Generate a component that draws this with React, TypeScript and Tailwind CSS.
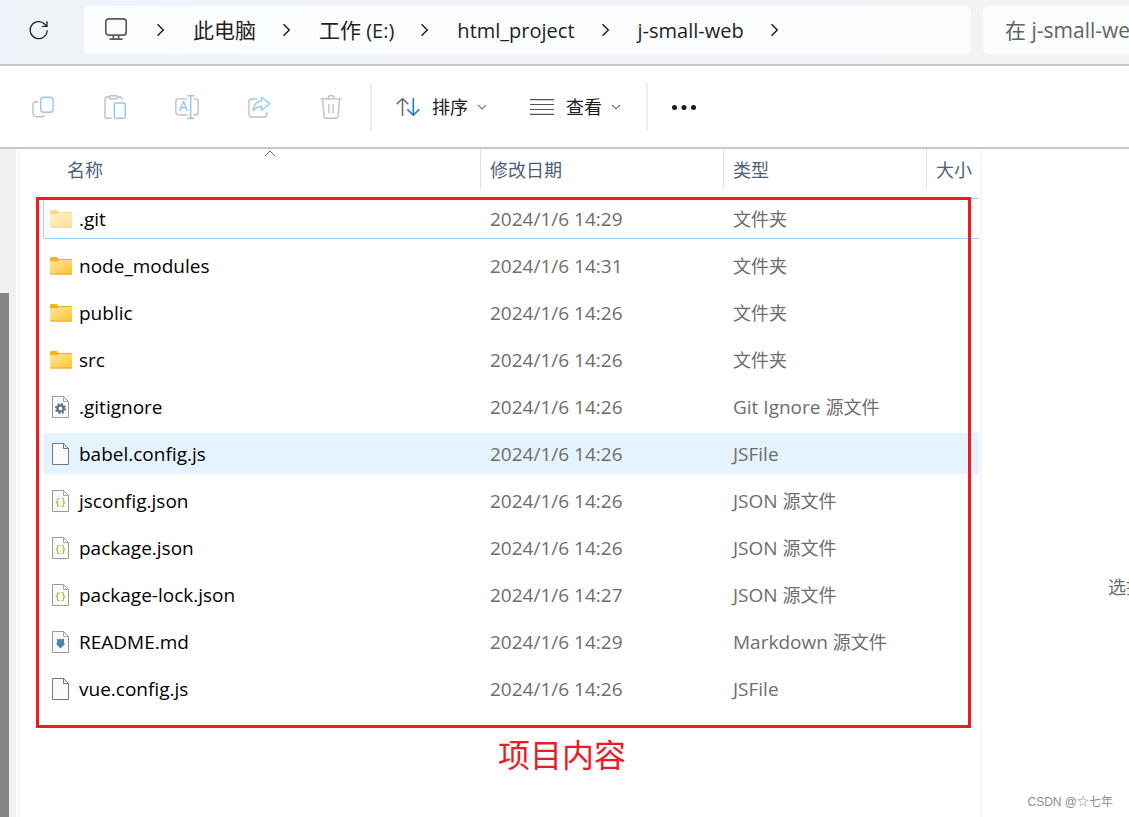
import clsx from 'clsx';

type IconKind = 'folder' | 'hidden' | 'gear' | 'blank' | 'json' | 'md';

interface FileItem {
  name: string;
  date: string;
  type: string;
  icon: IconKind;
  state?: 'focused' | 'hovered';
}

const FILES: FileItem[] = [
  { name: '.git', date: '2024/1/6 14:29', type: '文件夹', icon: 'hidden', state: 'focused' },
  { name: 'node_modules', date: '2024/1/6 14:31', type: '文件夹', icon: 'folder' },
  { name: 'public', date: '2024/1/6 14:26', type: '文件夹', icon: 'folder' },
  { name: 'src', date: '2024/1/6 14:26', type: '文件夹', icon: 'folder' },
  { name: '.gitignore', date: '2024/1/6 14:26', type: 'Git Ignore 源文件', icon: 'gear' },
  { name: 'babel.config.js', date: '2024/1/6 14:26', type: 'JSFile', icon: 'blank', state: 'hovered' },
  { name: 'jsconfig.json', date: '2024/1/6 14:26', type: 'JSON 源文件', icon: 'json' },
  { name: 'package.json', date: '2024/1/6 14:26', type: 'JSON 源文件', icon: 'json' },
  { name: 'package-lock.json', date: '2024/1/6 14:27', type: 'JSON 源文件', icon: 'json' },
  { name: 'README.md', date: '2024/1/6 14:29', type: 'Markdown 源文件', icon: 'md' },
  { name: 'vue.config.js', date: '2024/1/6 14:26', type: 'JSFile', icon: 'blank' },
];

const CRUMBS = ['此电脑', '工作 (E:)', 'html_project', 'j-small-web'];

const IcRefresh = () => (
  <svg width="20" height="20" viewBox="0 0 20 20" fill="none" stroke="#222" strokeWidth="1.3">
    <path d="M18.2 10.2A8.5 8.5 0 1 1 15.9 4.3L17.8 6.2" />
    <path d="M18 1.2V6.3H13" />
  </svg>
);

const IcMonitor = () => (
  <svg className="mb-0.5 shrink-0" width="24" height="24" viewBox="0 0 24 24" fill="none" stroke="#5b5b5f" strokeWidth="1.7">
    <rect x="1.8" y="1.8" width="20.4" height="16.4" rx="3" />
    <path d="M9.4 18.5V22M14.6 18.5V22M5.5 22.2H18.5" />
  </svg>
);

const IcCrumbArrow = () => (
  <svg className="shrink-0" width="9" height="14" viewBox="0 0 9 14" fill="none" stroke="#222" strokeWidth="1.5">
    <path d="M1.5 1.2L7.3 7L1.5 12.8" />
  </svg>
);

const IcDown = () => (
  <svg width="10" height="6" viewBox="0 0 10 6" fill="none" stroke="#777" strokeWidth="1.1">
    <path d="M1 1L5 5L9 1" />
  </svg>
);

const IcCopy = () => (
  <svg width="24" height="24" viewBox="0 0 24 24" fill="none" strokeWidth="1.4">
    <path d="M7 6.7H5A3 3 0 0 0 2 9.7V18.6A3.2 3.2 0 0 0 5.2 21.8H10.5A3.2 3.2 0 0 0 13.8 19.6" stroke="#c0c0c0" />
    <rect x="9.7" y="2.3" width="12.4" height="15" rx="3" stroke="#92c8f2" />
  </svg>
);

const IcPaste = () => (
  <svg width="24" height="24" viewBox="0 0 24 24" fill="none" stroke="#c0c0c0" strokeWidth="1.4">
    <path d="M6 2H3.6A1.6 1.6 0 0 0 2 3.6V21.7A1.6 1.6 0 0 0 3.6 23.3H8.5" />
    <path d="M14.8 2H17.2A1.6 1.6 0 0 1 18.8 3.6V4.8" />
    <rect x="6.2" y="0.7" width="8.4" height="3" rx="1.5" />
    <rect x="11.3" y="8" width="11" height="15.3" rx="1.6" stroke="#92c8f2" />
  </svg>
);

const IcRename = () => (
  <svg width="24" height="24" viewBox="0 0 24 24" fill="none" stroke="#c0c0c0" strokeWidth="1.4">
    <path d="M12.8 3.9H3.8A3 3 0 0 0 0.8 6.9V17A3 3 0 0 0 3.8 20H12.8" />
    <path d="M18.6 3.9H20.2A3 3 0 0 1 23.2 6.9V17A3 3 0 0 1 20.2 20H18.6" />
    <path d="M12.2 0.7H19.2M12.2 23.3H19.2M15.7 0.7V23.3" stroke="#92c8f2" />
    <text x="8.5" y="16.3" fontSize="14" textAnchor="middle" fontFamily="Open Sans, sans-serif" fill="#84c1f0" stroke="none">
      A
    </text>
  </svg>
);

const IcShare = () => (
  <svg width="24" height="24" viewBox="0 0 24 24" fill="none" strokeWidth="1.4" strokeLinejoin="round">
    <path d="M10 4H5A3 3 0 0 0 2 7V19A3 3 0 0 0 5 22H17A3 3 0 0 0 20 19V17.2" stroke="#c0c0c0" />
    <path d="M14.6 2.3L22.6 8.8L14.6 15.3V11.7C10.6 11.5 8.3 12.6 6.2 15.6C6.6 10 9.6 6.3 14.6 5.9Z" stroke="#92c8f2" />
  </svg>
);

const IcTrash = () => (
  <svg width="24" height="24" viewBox="0 0 24 24" fill="none" stroke="#c0c0c0" strokeWidth="1.4">
    <path d="M1.2 3.9H22.8M8.8 3.7A3.2 3.2 0 0 1 15.2 3.7" />
    <path d="M3.6 4L5 21.5A2 2 0 0 0 7 23.3H17A2 2 0 0 0 19 21.5L20.4 4" />
    <path d="M9.9 9.3V18M14.1 9.3V18" />
  </svg>
);

const IcSort = () => (
  <svg width="24" height="20" viewBox="0 0 24 20" fill="none" strokeWidth="1.5">
    <path d="M6.5 19V1.5M0.7 7.3L6.5 1.5L12.3 7.3" stroke="#666" />
    <path d="M17.3 1V18.3M11.4 12.4L17.3 18.3L23.3 12.4" stroke="#0f7bd8" />
  </svg>
);

const IcLines = () => (
  <svg width="24" height="16" viewBox="0 0 24 16" fill="none" stroke="#555" strokeWidth="1.2">
    <path d="M0 0.7H24M0 5.5H24M0 10.5H24M0 15.3H24" />
  </svg>
);

const IcMore = () => (
  <svg width="26" height="6" viewBox="0 0 26 6" fill="#1c1c1c">
    <circle cx="2.5" cy="3.5" r="2.5" />
    <circle cx="12" cy="3.5" r="2.5" />
    <circle cx="21.5" cy="3.5" r="2.5" />
  </svg>
);

const IcFolder = ({ faded }: { faded?: boolean }) => (
  <svg className={clsx(faded && 'opacity-50')} width="22" height="18" viewBox="0 0 22 18">
    <defs>
      <linearGradient id="folder" x1="0" y1="0" x2="1" y2="1">
        <stop offset="0" stopColor="#ffe8a0" />
        <stop offset="1" stopColor="#fdc22e" />
      </linearGradient>
    </defs>
    <path d="M0 1A1 1 0 0 1 1 0H7L8.5 2H21A1 1 0 0 1 22 3V8H0Z" fill="#f5b31a" />
    <path d="M0 4.2H7.5L9 3H22V16.5A1 1 0 0 1 21 17.5H1A1 1 0 0 1 0 16.5Z" fill="url(#folder)" />
    <path d="M0.3 17H21.7" stroke="#e5a520" />
  </svg>
);

const IcFile = ({ kind }: { kind: IconKind }) => (
  <svg width="18" height="22" viewBox="0 0 18 22" fill="none">
    <path d="M0.5 0.5H11.5L16.5 5.5V21.5H0.5Z" fill="#fafafa" stroke={kind === 'blank' ? '#777' : '#999'} />
    <path d="M11.5 0.5V5.5H16.5" stroke={kind === 'blank' ? '#777' : '#aaa'} />
    {kind === 'gear' && (
      <>
        <circle cx="8.5" cy="12.5" r="4.5" stroke="#5c707b" strokeWidth="2" strokeDasharray="1.9 1.63" />
        <circle cx="8.5" cy="12.5" r="3" stroke="#5c707b" strokeWidth="2.2" />
      </>
    )}
    {kind === 'json' && (
      <path
        d="M7.5 8.5H6.5C5.8 8.5 5.5 8.8 5.5 9.5V11.5L4.3 12.5L5.5 13.5V15.5C5.5 16.2 5.8 16.5 6.5 16.5H7.5M9.5 8.5H10.5C11.2 8.5 11.5 8.8 11.5 9.5V11.5L12.7 12.5L11.5 13.5V15.5C11.5 16.2 11.2 16.5 10.5 16.5H9.5"
        stroke="#b9bb3d"
        strokeWidth="1.2"
      />
    )}
    {kind === 'md' && <path d="M5 7.2L6.8 8.6L8.5 7.8L10.2 8.6L12 7.2V12.4H13.4L8.5 17.6L3.6 12.4H5Z" fill="#4788a6" />}
  </svg>
);

const FileIcon = ({ kind }: { kind: IconKind }) => (
  <span className="flex w-[22px] shrink-0 justify-center">
    {kind === 'folder' || kind === 'hidden' ? <IcFolder faded={kind === 'hidden'} /> : <IcFile kind={kind} />}
  </span>
);

// latin letters are set one step apart from the CJK ones
const MixedText = ({ text, latin }: { text: string; latin: string }) => (
  <span className="pt-0.5 whitespace-pre">
    {text.split(/([\x20-\x7e]+)/).filter(Boolean).map((part) => (
      <span key={part} className={clsx(/^[\x20-\x7e]/.test(part) && latin)}>
        {part}
      </span>
    ))}
  </span>
);

const FileRow = ({ file }: { file: FileItem }) => {
  const cell = clsx(
    'flex h-[41px] items-center border-y',
    file.state === 'focused' ? 'border-[#99d1ff]' : 'border-transparent',
    file.state === 'hovered' && 'bg-[#e5f3ff]',
  );

  return (
    <tr className="h-[47px] text-[18px] text-[#6d6d6d]">
      <td>
        <div className={clsx(cell, 'gap-[7px] rounded-l-xs border-l pl-[6px] text-[19px] text-black')}>
          <FileIcon kind={file.icon} />
          <span className="pt-0.5">{file.name}</span>
        </div>
      </td>
      <td>
        <div className={clsx(cell, 'pl-[10px] text-[19px]')}>
          <span className="pt-0.5">{file.date}</span>
        </div>
      </td>
      <td>
        <div className={clsx(cell, 'pl-[10px]')}>
          <MixedText text={file.type} latin="text-[19px]" />
        </div>
      </td>
      <td>
        <div className={cell} />
      </td>
    </tr>
  );
};

const AddressBar = () => {
  return (
    <header className="flex h-[66px] items-start border-b-2 border-[#c2c9d5] bg-linear-to-r from-[#eff3f9] to-[#f3f3f5] pt-[6px]">
      <button type="button" aria-label="刷新" className="flex h-12 w-[84px] shrink-0 items-center pl-[29px]">
        <IcRefresh />
      </button>
      <nav className="flex h-12 min-w-0 flex-1 items-center gap-7 overflow-hidden rounded-md bg-[#fbfcfe] pl-5 text-[21px] text-[#1f1f1f]">
        <IcMonitor />
        <IcCrumbArrow />
        {CRUMBS.map((crumb) => (
          <div key={crumb} className="flex items-center gap-[26px] whitespace-nowrap">
            <a href="#" className="flex">
              <MixedText text={crumb} latin="text-[20px]" />
            </a>
            <IcCrumbArrow />
          </div>
        ))}
      </nav>
      <input
        type="text"
        aria-label="搜索"
        placeholder="在 j-small-web 中搜索"
        className="ml-3 h-12 w-[146px] shrink-0 rounded-l-md bg-[#fbfdfd] pl-[22px] text-[21px] text-[#1f1f1f] outline-none placeholder:text-[#636363]"
      />
    </header>
  );
};

const TOOLS = [
  { label: '复制', icon: <IcCopy /> },
  { label: '粘贴', icon: <IcPaste /> },
  { label: '重命名', icon: <IcRename /> },
  { label: '共享', icon: <IcShare /> },
  { label: '删除', icon: <IcTrash /> },
];

const Toolbar = () => {
  return (
    <div className="flex h-[83px] items-center border-b-2 border-[#c2c9d5] bg-white pl-[31px] text-[18px] text-[#1c1c1c]">
      <div className="flex gap-12">
        {TOOLS.map((tool) => (
          <button key={tool.label} type="button" aria-label={tool.label} disabled>
            {tool.icon}
          </button>
        ))}
      </div>
      <div className="ml-[27px] flex h-12 items-center border-x-2 border-[#ededed] pr-[25px] pl-6">
        <button type="button" className="flex items-center">
          <IcSort />
          <span className="mr-[9px] ml-3 pt-0.5">排序</span>
          <IcDown />
        </button>
        <button type="button" className="ml-[43px] flex items-center">
          <IcLines />
          <span className="mr-[9px] ml-3 pt-0.5">查看</span>
          <IcDown />
        </button>
      </div>
      <button type="button" aria-label="更多" className="ml-6">
        <IcMore />
      </button>
    </div>
  );
};

const FileTable = () => {
  return (
    <table className="w-full table-fixed border-collapse text-left">
      <colgroup>
        <col />
        <col className="w-[243px]" />
        <col className="w-[203px]" />
        <col className="w-[53px]" />
      </colgroup>
      <thead>
        <tr className="h-[46px] align-top text-[18px] text-[#4c607a]">
          <th className="relative font-normal">
            <div className="flex h-10 items-center pt-0.5 pl-6">名称</div>
            <svg
              className="absolute top-[1px] left-1/2 ml-0.5"
              width="12"
              height="7"
              viewBox="0 0 12 7"
              fill="none"
              stroke="#666"
            >
              <path d="M0.7 6.2L6 1L11.3 6.2" />
            </svg>
          </th>
          {['修改日期', '类型', '大小'].map((title) => (
            <th key={title} className="font-normal">
              <div className="flex h-10 items-center border-l border-[#e2e2e2] pt-0.5 pl-[9px] whitespace-nowrap">
                {title}
              </div>
            </th>
          ))}
        </tr>
      </thead>
      <tbody>
        {FILES.map((file) => (
          <FileRow key={file.name} file={file} />
        ))}
      </tbody>
    </table>
  );
};

const App = () => {
  return (
    <div className="relative flex min-h-screen flex-col overflow-hidden bg-white font-['Open_Sans','Noto_Sans_CJK_SC',sans-serif]">
      <AddressBar />
      <Toolbar />
      <main className="flex flex-1">
        <div className="mr-[2px] w-4 shrink-0 bg-[#f0f0f0] pt-36">
          <div className="h-full w-[9px] bg-[#858585]" />
        </div>
        <section className="min-w-0 flex-1 border-x-2 border-[#f6f6f8] pr-[1px] pl-[23px]">
          <div className="relative">
            <FileTable />
            <div className="pointer-events-none absolute top-12 right-2 -bottom-4 -left-[7px] border-3 border-[#ed1c24]" />
          </div>
          <p className="mt-[19px] pl-[455px] text-[32px] leading-[48px] text-[#ed1c24]">项目内容</p>
        </section>
        <aside className="flex w-[147px] shrink-0 items-center overflow-hidden pt-[208px] pl-[126px] text-[18px] whitespace-nowrap text-[#6d6d6d]">
          选择
        </aside>
      </main>
      <span className="absolute right-4 bottom-[7px] font-['Liberation_Sans','Noto_Sans_CJK_SC',sans-serif] text-[12px] leading-4 text-[#8e8e8e]">
        CSDN @☆七年
      </span>
    </div>
  );
};

export default App;
